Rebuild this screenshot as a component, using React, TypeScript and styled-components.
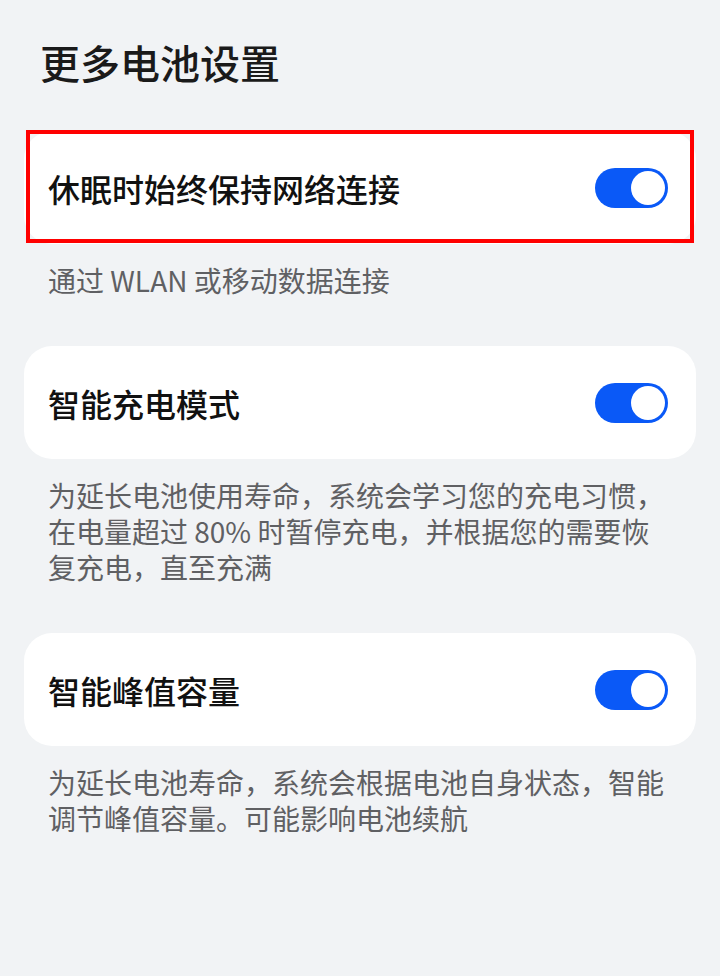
import React, { useState } from "react";
import styled, { createGlobalStyle } from "styled-components";

const GlobalStyle = createGlobalStyle`
  html, body {
    margin: 0;
    padding: 0;
    background: #f1f3f5;
  }
  body {
    font-family: "Noto Sans CJK SC", "Noto Sans", "Liberation Sans", sans-serif;
    -webkit-font-smoothing: antialiased;
  }
  * { box-sizing: border-box; }
`;

const Page = styled.main`
  min-height: 976px;
  background: #f1f3f5;
  padding: 34px 24px 0;
  display: flex;
  flex-direction: column;
`;

const Title = styled.h1`
  margin: 0 0 41px;
  padding: 0 16px;
  font-size: 40px;
  line-height: 56px;
  font-weight: 500;
  color: #1a1a1a;
  letter-spacing: 0;
`;

const Section = styled.section`
  display: flex;
  flex-direction: column;
`;

const Card = styled.div<{ $highlight?: boolean }>`
  position: relative;
  height: 113px;
  background: #ffffff;
  border-radius: 28px;
  padding: 0 28px 0 24px;
  display: flex;
  align-items: center;
  justify-content: space-between;

  ${({ $highlight }) =>
    $highlight &&
    `
    &::after {
      content: "";
      position: absolute;
      top: -1px;
      left: 2px;
      right: 2px;
      bottom: 1px;
      border: 4px solid #ff0000;
      pointer-events: none;
    }
  `}
`;

const RowLabel = styled.span`
  font-size: 32px;
  line-height: 44px;
  font-weight: 500;
  color: #111111;
`;

const Desc = styled.p`
  margin: 0;
  padding: 18px 24px 48px;
  font-size: 28px;
  line-height: 36px;
  font-weight: 400;
  color: #5f6063;
`;

const Track = styled.button<{ $on: boolean }>`
  position: relative;
  flex: none;
  width: 73px;
  height: 40px;
  border: none;
  padding: 0;
  border-radius: 20px;
  background: ${({ $on }) => ($on ? "#0a59f7" : "#c8cbd0")};
  cursor: pointer;
`;

const Knob = styled.span<{ $on: boolean }>`
  position: absolute;
  top: 3px;
  left: ${({ $on }) => ($on ? "36px" : "3px")};
  width: 34px;
  height: 34px;
  border-radius: 50%;
  background: #ffffff;
`;

function Toggle({ initial = true }: { initial?: boolean }) {
  const [on, setOn] = useState(initial);
  return (
    <Track
      type="button"
      role="switch"
      aria-checked={on}
      $on={on}
      onClick={() => setOn(!on)}
    >
      <Knob $on={on} />
    </Track>
  );
}

type Item = {
  label: string;
  lines: string[];
  highlight?: boolean;
};

const items: Item[] = [
  {
    label: "休眠时始终保持网络连接",
    lines: ["通过 WLAN 或移动数据连接"],
    highlight: true,
  },
  {
    label: "智能充电模式",
    lines: [
      "为延长电池使用寿命，系统会学习您的充电习惯，",
      "在电量超过 80% 时暂停充电，并根据您的需要恢",
      "复充电，直至充满",
    ],
  },
  {
    label: "智能峰值容量",
    lines: [
      "为延长电池寿命，系统会根据电池自身状态，智能",
      "调节峰值容量。可能影响电池续航",
    ],
  },
];

export default function App() {
  return (
    <>
      <GlobalStyle />
      <Page>
        <Title>更多电池设置</Title>
        {items.map((item) => (
          <Section key={item.label}>
            <Card $highlight={item.highlight}>
              <RowLabel>{item.label}</RowLabel>
              <Toggle />
            </Card>
            <Desc>
              {item.lines.map((l, i) => (
                <React.Fragment key={i}>
                  {l}
                  {i < item.lines.length - 1 && <br />}
                </React.Fragment>
              ))}
            </Desc>
          </Section>
        ))}
      </Page>
    </>
  );
}
